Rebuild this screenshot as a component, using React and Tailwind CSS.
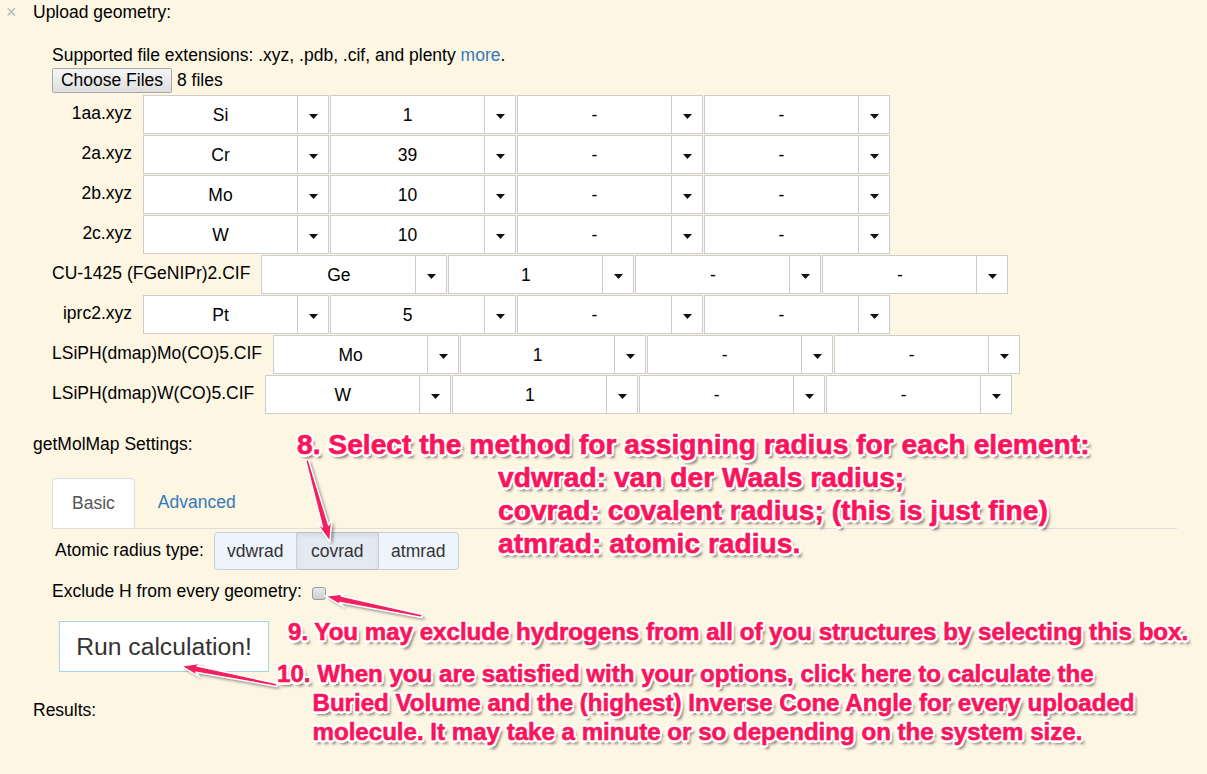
import React from "react";

const rows = [
  ["1aa.xyz", "Si", "1"],
  ["2a.xyz", "Cr", "39"],
  ["2b.xyz", "Mo", "10"],
  ["2c.xyz", "W", "10"],
  ["CU-1425 (FGeNIPr)2.CIF", "Ge", "1"],
  ["iprc2.xyz", "Pt", "5"],
  ["LSiPH(dmap)Mo(CO)5.CIF", "Mo", "1"],
  ["LSiPH(dmap)W(CO)5.CIF", "W", "1"],
];

const note =
  "absolute font-bold text-[#fa145a] whitespace-nowrap [font-family:'Liberation_Sans',Arial,sans-serif] [-webkit-text-stroke:0.6px_#fa145a] [text-shadow:-2px_-2px_0_#fff,2px_-2px_0_#fff,-2px_2px_0_#fff,2px_2px_0_#fff,0_2.5px_0_#fff,0_-2.5px_0_#fff,2.5px_0_0_#fff,-2.5px_0_0_#fff,3px_3.5px_3px_rgba(0,0,0,0.55)]";

function Select({ value }) {
  return (
    <div className="flex h-[39px] w-[186px] bg-white border border-[#cdcdcd]">
      <div className="flex-1 flex items-center justify-center pt-[2px]">{value}</div>
      <div className="w-[31px] border-l border-[#cdcdcd] flex items-center justify-center pt-[4px]">
        <svg width="9" height="5" viewBox="0 0 9 5">
          <path d="M0 0 L9 0 L4.5 5 Z" fill="#111" />
        </svg>
      </div>
    </div>
  );
}

function arrow(x1, y1, x2, y2, headLen, headW, tailW, neckW) {
  const dx = x2 - x1;
  const dy = y2 - y1;
  const L = Math.hypot(dx, dy);
  const ux = dx / L;
  const uy = dy / L;
  const nx = -uy;
  const ny = ux;
  const bx = x2 - ux * headLen;
  const by = y2 - uy * headLen;
  const cx = x2 - ux * headLen * 0.75;
  const cy = y2 - uy * headLen * 0.75;
  const p = [
    [x1 + (nx * tailW) / 2, y1 + (ny * tailW) / 2],
    [cx + (nx * neckW) / 2, cy + (ny * neckW) / 2],
    [bx + (nx * headW) / 2, by + (ny * headW) / 2],
    [x2, y2],
    [bx - (nx * headW) / 2, by - (ny * headW) / 2],
    [cx - (nx * neckW) / 2, cy - (ny * neckW) / 2],
    [x1 - (nx * tailW) / 2, y1 - (ny * tailW) / 2],
  ];
  return p.map((q) => q[0].toFixed(1) + "," + q[1].toFixed(1)).join(" ");
}

const arrows = [
  arrow(307, 460, 330, 542, 22, 16, 3, 6.5),
  arrow(422, 616, 325, 596, 21, 14, 3, 6.5),
  arrow(277, 685, 181, 666, 21, 15, 3, 6.5),
];

export default function App() {
  return (
    <div className="relative w-[1207px] h-[774px] overflow-hidden bg-[#fdf6e3] text-black text-[17.5px] leading-[25px] [font-family:'Liberation_Sans',Arial,sans-serif]">
      <div className="pl-[33px]">
        <div className="flex h-[25px] items-center -ml-[28px]">
          <span className="w-[28px] text-[#b8b8b8] text-[18px] pl-[1px]">×</span>
          <span>Upload geometry:</span>
        </div>

        <div className="ml-[19px]">
          <div className="mt-[17.5px]">
            Supported file extensions: .xyz, .pdb, .cif, and plenty{" "}
            <span className="text-[#337ab7]">more</span>.
          </div>
          <div className="flex items-center h-[25px]">
            <div className="h-[25px] w-[120px] flex items-center justify-center rounded-[2px] border border-[#a6a6a6] bg-gradient-to-b from-[#f6f6f6] to-[#dedede]">
              Choose Files
            </div>
            <span className="ml-[5px]">8 files</span>
          </div>

          <div className="mt-[2.5px] flex flex-col gap-px">
            {rows.map(([name, el, n]) => (
              <div key={name} className="flex items-center h-[39px]">
                <div className="min-w-[80px] text-right mr-[11px] -mt-[2px]">{name}</div>
                <div className="flex gap-px">
                  <Select value={el} />
                  <Select value={n} />
                  <Select value="-" />
                  <Select value="-" />
                </div>
              </div>
            ))}
          </div>
        </div>

        <div className="mt-[18px]">getMolMap Settings:</div>

        <div className="ml-[19px]">
          <div className="mt-[20.5px] w-[1125px] flex border-b border-[#dddddd]">
            <div className="h-[50px] px-[19px] flex items-center bg-white border border-b-0 border-[#dddddd] rounded-t-[5px] text-[#555] -mb-px">
              Basic
            </div>
            <div className="h-[50px] ml-[3px] px-[20px] flex items-center text-[#337ab7]">Advanced</div>
          </div>

          <div className="mt-[3.5px] flex items-center h-[38px] pl-[3px]">
            <span className="-mt-[2px]">Atomic radius type:</span>
            <div className="ml-[10px] flex h-[38px] text-[#333]">
              <div className="w-[83px] flex items-center justify-center bg-[#edf4fb] border border-[#c9ced3] rounded-l-[4px]">vdwrad</div>
              <div className="w-[81px] flex items-center justify-center bg-[#e3eaf1] border-y border-[#b9bec3] shadow-[inset_0_3px_5px_rgba(0,0,0,0.06)]">covrad</div>
              <div className="w-[81px] flex items-center justify-center bg-[#edf4fb] border border-[#c9ced3] rounded-r-[4px]">atmrad</div>
            </div>
          </div>

          <div className="mt-[9px] flex items-center h-[25px]">
            <span>Exclude H from every geometry:</span>
            <span className="ml-[10px] mt-[4px] w-[14px] h-[13px] rounded-[3px] border border-[#9a9a9a] bg-gradient-to-b from-[#e8e8e8] to-[#cfcfcf]" />
          </div>

          <div className="mt-[17px] ml-[7px] w-[210px] h-[51px] flex items-center justify-center bg-white border border-[#a9d3ec] text-[#333] text-[24.7px]">
            Run calculation!
          </div>
        </div>

        <div className="mt-[26px]">Results:</div>
      </div>

      <svg className="absolute inset-0 pointer-events-none" width="1207" height="774">
        <defs>
          <filter id="sh" x="-20%" y="-20%" width="140%" height="140%">
            <feGaussianBlur stdDeviation="1.5" />
          </filter>
        </defs>
        {arrows.map((pts, i) => (
          <g key={i}>
            <polygon points={pts} fill="rgba(0,0,0,0.4)" transform="translate(2.5,2.5)" filter="url(#sh)" />
            <polygon points={pts} fill="#f4205e" stroke="#fff" strokeWidth="1.5" strokeLinejoin="round" />
          </g>
        ))}
      </svg>

      <div className={note + " left-[297px] top-[427.5px] text-[28.2px] leading-[33px]"}>
        <div>8. Select the method for assigning radius for each element:</div>
        <div className="pl-[201px]">vdwrad: van der Waals radius;</div>
        <div className="pl-[201px]">covrad: covalent radius; (this is just fine)</div>
        <div className="pl-[201px]">atmrad: atomic radius.</div>
      </div>

      <div className={note + " left-[288px] top-[616.5px] text-[24.1px] leading-[29px]"}>
        9. You may exclude hydrogens from all of you structures by selecting this box.
      </div>

      <div className={note + " left-[277px] top-[658.5px] text-[24.1px] leading-[29px]"}>
        <div>10. When you are satisfied with your options, click here to calculate the</div>
        <div className="pl-[35.5px]">Buried Volume and the (highest) Inverse Cone Angle for every uploaded</div>
        <div className="pl-[35.5px]">molecule. It may take a minute or so depending on the system size.</div>
      </div>
    </div>
  );
}
